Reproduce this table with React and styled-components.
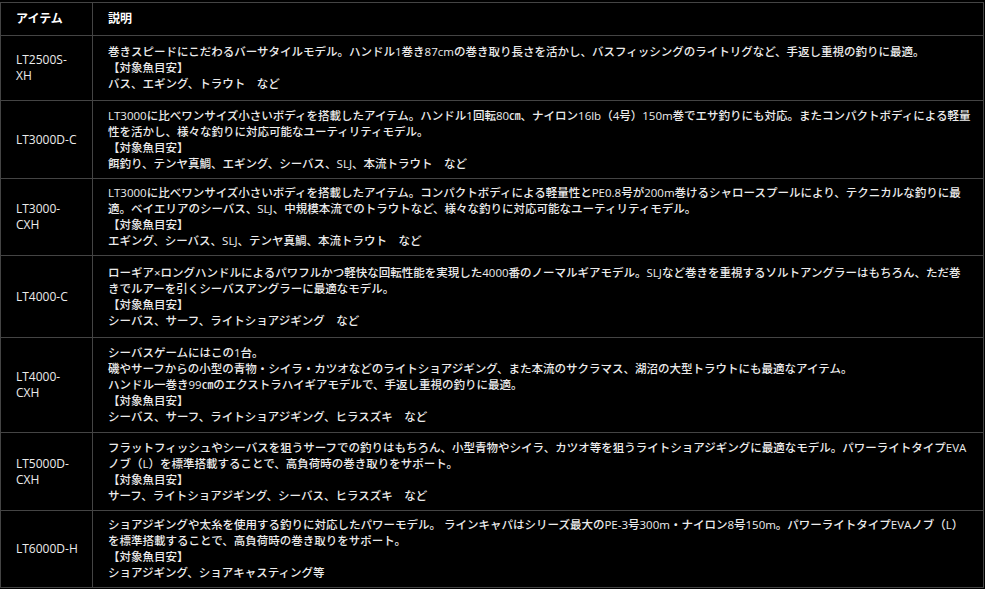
import React from 'react';
import styled, { createGlobalStyle } from 'styled-components';

const GlobalStyle = createGlobalStyle`
  html, body {
    margin: 0;
    padding: 0;
    background: #000;
  }
  body {
    font-family: "Open Sans", "Noto Sans CJK JP", sans-serif;
  }
`;

const Page = styled.div`
  padding-top: 2px;
  width: 984px;
`;

const Table = styled.table`
  width: 100%;
  border-collapse: collapse;
  table-layout: fixed;
  background: #000;
  color: #ececec;
  font-size: 11.5px;
  font-weight: 500;
  line-height: 16px;

  th, td {
    box-sizing: border-box;
    border: 1px solid #444;
  }
`;

const HeadCell = styled.th`
  height: 33px;
  padding: 0 0 0 15px;
  text-align: left;
  font-weight: 700;
  font-size: 12px;
  color: #fff;
  width: ${p => p.$w || 'auto'};
`;

const Row = styled.tr`
  height: ${p => p.$h}px;
`;

const NameCell = styled.td`
  padding: 5px 8px 5px 15px;
  vertical-align: middle;
  font-size: 12px;
  white-space: nowrap;
`;

const TextCell = styled.td`
  padding: 5px 6px 5px 15px;
  vertical-align: middle;
`;

const Line = styled.div`
  white-space: nowrap;
`;

const items = [
  {
    name: ['LT2500S-', 'XH'],
    h: 65,
    lines: [
      '巻きスピードにこだわるバーサタイルモデル。ハンドル1巻き87cmの巻き取り長さを活かし、バスフィッシングのライトリグなど、手返し重視の釣りに最適。',
      '【対象魚目安】',
      'バス、エギング、トラウト　など',
    ],
  },
  {
    name: ['LT3000D-C'],
    h: 78,
    lines: [
      'LT3000に比べワンサイズ小さいボディを搭載したアイテム。ハンドル1回転80㎝、ナイロン16lb（4号）150m巻でエサ釣りにも対応。またコンパクトボディによる軽量',
      '性を活かし、様々な釣りに対応可能なユーティリティモデル。',
      '【対象魚目安】',
      '餌釣り、テンヤ真鯛、エギング、シーバス、SLJ、本流トラウト　など',
    ],
  },
  {
    name: ['LT3000-', 'CXH'],
    h: 77,
    lines: [
      'LT3000に比べワンサイズ小さいボディを搭載したアイテム。コンパクトボディによる軽量性とPE0.8号が200m巻けるシャロースプールにより、テクニカルな釣りに最',
      '適。ベイエリアのシーバス、SLJ、中規模本流でのトラウトなど、様々な釣りに対応可能なユーティリティモデル。',
      '【対象魚目安】',
      'エギング、シーバス、SLJ、テンヤ真鯛、本流トラウト　など',
    ],
  },
  {
    name: ['LT4000-C'],
    h: 82,
    lines: [
      'ローギア×ロングハンドルによるパワフルかつ軽快な回転性能を実現した4000番のノーマルギアモデル。SLJなど巻きを重視するソルトアングラーはもちろん、ただ巻',
      'きでルアーを引くシーバスアングラーに最適なモデル。',
      '【対象魚目安】',
      'シーバス、サーフ、ライトショアジギング　など',
    ],
  },
  {
    name: ['LT4000-', 'CXH'],
    h: 95,
    lines: [
      'シーバスゲームにはこの1台。',
      '磯やサーフからの小型の青物・シイラ・カツオなどのライトショアジギング、また本流のサクラマス、湖沼の大型トラウトにも最適なアイテム。',
      'ハンドル一巻き99㎝のエクストラハイギアモデルで、手返し重視の釣りに最適。',
      '【対象魚目安】',
      'シーバス、サーフ、ライトショアジギング、ヒラスズキ　など',
    ],
  },
  {
    name: ['LT5000D-', 'CXH'],
    h: 78,
    lines: [
      'フラットフィッシュやシーバスを狙うサーフでの釣りはもちろん、小型青物やシイラ、カツオ等を狙うライトショアジギングに最適なモデル。パワーライトタイプEVA',
      'ノブ（L）を標準搭載することで、高負荷時の巻き取りをサポート。',
      '【対象魚目安】',
      'サーフ、ライトショアジギング、シーバス、ヒラスズキ　など',
    ],
  },
  {
    name: ['LT6000D-H'],
    h: 77,
    lines: [
      'ショアジギングや太糸を使用する釣りに対応したパワーモデル。 ラインキャパはシリーズ最大のPE-3号300m・ナイロン8号150m。パワーライトタイプEVAノブ（L）',
      'を標準搭載することで、高負荷時の巻き取りをサポート。',
      '【対象魚目安】',
      'ショアジギング、ショアキャスティング等',
    ],
  },
];

export default function App() {
  return (
    <>
      <GlobalStyle />
      <Page>
        <Table>
          <thead>
            <tr>
              <HeadCell $w="92px">アイテム</HeadCell>
              <HeadCell>説明</HeadCell>
            </tr>
          </thead>
          <tbody>
            {items.map(item => (
              <Row key={item.name.join('')} $h={item.h}>
                <NameCell>
                  {item.name.map(n => <Line key={n}>{n}</Line>)}
                </NameCell>
                <TextCell>
                  {item.lines.map((l, i) => <Line key={i}>{l}</Line>)}
                </TextCell>
              </Row>
            ))}
          </tbody>
        </Table>
      </Page>
    </>
  );
}
